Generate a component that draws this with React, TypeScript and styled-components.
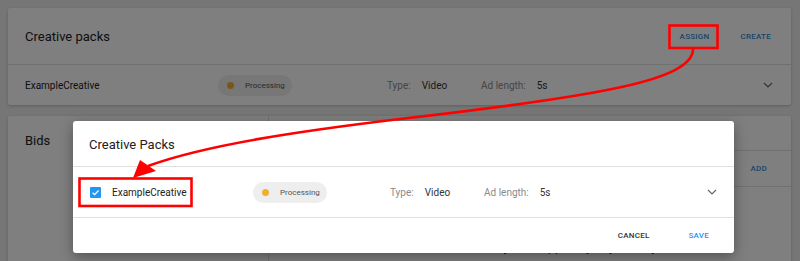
import styled, { createGlobalStyle } from 'styled-components'

const GlobalStyle = createGlobalStyle`
  html, body {
    margin: 0;
    height: 261px;
    overflow: hidden;
    background: #ececec;
    font-family: Roboto, 'Liberation Sans', sans-serif;
    color: #212121;
  }
`

const Page = styled.div`
  position: relative;
  height: 261px;
  padding: 8px 9px 0 8px;
  box-sizing: border-box;
  display: flex;
  flex-direction: column;
  gap: 11px;
`

const Card = styled.div`
  background: #fff;
  border-radius: 2px;
  box-shadow: 0 1px 3px rgba(0, 0, 0, 0.2);
  flex-shrink: 0;
`

const CardHeader = styled.div`
  height: 57px;
  display: flex;
  align-items: center;
  padding: 0 9px 0 17px;
  border-bottom: 1px solid #e0e0e0;
  box-sizing: border-box;
`

const CardTitle = styled.div`
  font-size: 13px;
  line-height: 16px;
  padding-top: 1px;
`

const Actions = styled.div`
  margin-left: auto;
  display: flex;
  gap: 9px;
`

const TextButton = styled.div<{ $color?: string }>`
  padding: 6px 11px;
  font-size: 8px;
  font-weight: 500;
  letter-spacing: 0.25px;
  text-transform: uppercase;
  color: ${(p) => p.$color || '#2d8fd5'};
`

const PackRow = styled.div<{ $height: number; $padRight: number }>`
  height: ${(p) => p.$height}px;
  display: flex;
  align-items: center;
  padding: 0 ${(p) => p.$padRight}px 0 17px;
  box-sizing: border-box;
  font-size: 10px;
`

const Checkbox = styled.div`
  width: 11px;
  height: 11px;
  border-radius: 1px;
  background: #2196f3;
  display: flex;
  align-items: center;
  justify-content: center;
  margin-right: 11px;
`

const Name = styled.div<{ $width: number }>`
  width: ${(p) => p.$width}px;
  font-size: 10px;
  color: #212121;
`

const Pill = styled.div<{ $gap: number }>`
  width: 74px;
  height: 21px;
  border-radius: 11px;
  background: #eeeeee;
  display: flex;
  align-items: center;
  padding-left: 9px;
  box-sizing: border-box;
  font-size: 8px;
  color: #555;
  margin-right: ${(p) => p.$gap}px;
`

const Dot = styled.span`
  width: 7px;
  height: 7px;
  border-radius: 50%;
  background: #efb030;
  margin-right: 11px;
`

const Field = styled.div<{ $width: number }>`
  width: ${(p) => p.$width}px;
  display: flex;
  gap: 11px;
`

const Label = styled.span`
  color: #8a8a8a;
`

const Value = styled.span`
  color: #333;
`

const Chevron = styled.div`
  margin-left: auto;
  display: flex;
`

const BidsCard = styled(Card)`
  height: 220px;
  display: grid;
  grid-template-columns: 261px 1fr;
`

const BidsSide = styled.div`
  border-right: 1px solid #e0e0e0;
  padding: 16px 17px;
`

const BidsMain = styled.div`
  display: flex;
  flex-direction: column;
`

const MainHead = styled.div`
  height: 34px;
  border-bottom: 1px solid #e0e0e0;
`

const MainBar = styled.div`
  height: 35px;
  display: flex;
  justify-content: flex-end;
  align-items: center;
  padding-right: 13px;
  border-bottom: 1px solid #e0e0e0;
`

const EmptyText = styled.div`
  padding-top: 50px;
  text-align: center;
  font-size: 13px;
  line-height: 20px;
  color: #212121;
`

const Overlay = styled.div`
  position: absolute;
  inset: 0;
  background: rgba(0, 0, 0, 0.5);
  padding: 121px 0 0 73px;
  box-sizing: border-box;
`

const Dialog = styled.div`
  width: 661px;
  background: #fff;
  border-radius: 3px;
  box-shadow: 0 4px 14px rgba(0, 0, 0, 0.35);
`

const DialogTitle = styled.div`
  height: 46px;
  display: flex;
  align-items: center;
  padding: 1px 0 0 16px;
  font-size: 13px;
  border-bottom: 1px solid #e0e0e0;
  box-sizing: border-box;
`

const DialogBody = styled.div`
  border-bottom: 1px solid #e0e0e0;
`

const DialogFooter = styled.div`
  height: 35px;
  display: flex;
  justify-content: flex-end;
  align-items: center;
  gap: 17px;
  padding-right: 14px;
`

const Annotation = styled.svg`
  position: absolute;
  left: 0;
  top: 0;
  pointer-events: none;
`

const ChevronIcon = () => (
  <svg width="10" height="6" viewBox="0 0 10 6">
    <path d="M1 1l4 4 4-4" fill="none" stroke="#666" strokeWidth="1.2" />
  </svg>
)

const PackInfo = ({ gap }: { gap: number }) => (
  <>
    <Pill $gap={gap}>
      <Dot />
      Processing
    </Pill>
    <Field $width={94}>
      <Label>Type:</Label>
      <Value>Video</Value>
    </Field>
    <Field $width={120}>
      <Label>Ad length:</Label>
      <Value>5s</Value>
    </Field>
    <Chevron>
      <ChevronIcon />
    </Chevron>
  </>
)

const App = () => {
  return (
    <>
      <GlobalStyle />
      <Page>
        <Card>
          <CardHeader>
            <CardTitle>Creative packs</CardTitle>
            <Actions>
              <TextButton>Assign</TextButton>
              <TextButton>Create</TextButton>
            </Actions>
          </CardHeader>
          <PackRow $height={40} $padRight={18}>
            <Name $width={193}>ExampleCreative</Name>
            <PackInfo gap={95} />
          </PackRow>
        </Card>

        <BidsCard>
          <BidsSide>
            <CardTitle>Bids</CardTitle>
          </BidsSide>
          <BidsMain>
            <MainHead />
            <MainBar>
              <TextButton>Add</TextButton>
            </MainBar>
            <EmptyText>
              You don't have any bids applied yet, you may
              <br />
              create them
            </EmptyText>
          </BidsMain>
        </BidsCard>

        <Overlay>
          <Dialog>
            <DialogTitle>Creative Packs</DialogTitle>
            <DialogBody>
              <PackRow $height={50} $padRight={17}>
                <Checkbox>
                  <svg width="9" height="9" viewBox="0 0 10 10">
                    <path d="M1.8 5.2l2.2 2.2 4.4-4.6" fill="none" stroke="#fff" strokeWidth="1.4" />
                  </svg>
                </Checkbox>
                <Name $width={141}>ExampleCreative</Name>
                <PackInfo gap={63} />
              </PackRow>
            </DialogBody>
            <DialogFooter>
              <TextButton $color="#333">Cancel</TextButton>
              <TextButton $color="#2196f3">Save</TextButton>
            </DialogFooter>
          </Dialog>
        </Overlay>

        <Annotation width="800" height="261">
          <rect x="669.5" y="25.5" width="48" height="22.5" fill="none" stroke="#ff0000" strokeWidth="2.6" />
          <rect x="79.5" y="178.5" width="112" height="27.5" fill="none" stroke="#ff0000" strokeWidth="2.6" />
          <path
            d="M693 49 C693 80 600 96 400 119 C300 131 205 145 148 166"
            fill="none"
            stroke="#ff0000"
            strokeWidth="2.6"
          />
          <polygon points="133,178 140,160 156,171" fill="#ff0000" />
        </Annotation>
      </Page>
    </>
  )
}

export default App
